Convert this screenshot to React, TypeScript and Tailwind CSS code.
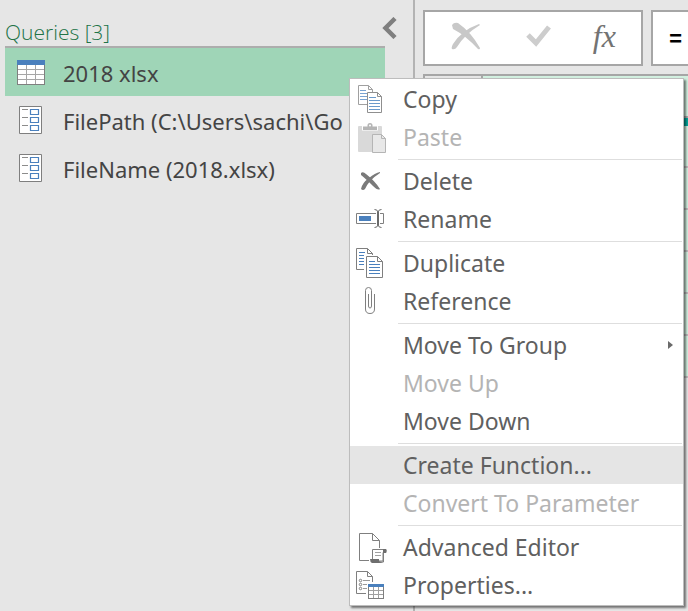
import React from "react";

type IconProps = { children: React.ReactNode };

function Glyph({ children }: IconProps) {
  return (
    <svg width="32" height="32" viewBox="0 0 32 32" fill="none" className="shrink-0 overflow-visible" aria-hidden="true">
      {children}
    </svg>
  );
}

function TableIcon() {
  return (
    <svg width="28" height="25" viewBox="0 0 28 25" className="shrink-0" aria-hidden="true">
      <path d="M0 0h28v25H0z" fill="#7f7f7f" />
      <path d="M1 5h26v19H1z" fill="#fff" />
      <path d="M0 0h28v5H0z" fill="#4a80bd" />
      <path d="M1 9.5h26M1 14.5h26M1 19.5h26M9.5 5v19M18.5 5v19" stroke="#a6a6a6" />
    </svg>
  );
}

function FormIcon() {
  return (
    <svg width="28" height="28" viewBox="0 0 28 28" className="shrink-0" fill="none" aria-hidden="true">
      <path d="M2.5 .5h22v27h-22z" fill="#fff" stroke="#7f7f7f" />
      <path d="M5 3.5h6M5 11.5h6M5 19.5h6" stroke="#8c8c8c" />
      <path d="M13.5 3.5h8v5h-8zM13.5 11.5h8v5h-8zM13.5 19.5h8v5h-8z" stroke="#4a80bd" strokeWidth="1.200" />
    </svg>
  );
}

function CopyIcon() {
  return (
    <Glyph>
      <path d="M2.5 2.5h10l4 4v15h-14z" fill="#fff" stroke="#a0a0a0" />
      <path d="M12.5 2.5v4h4" stroke="#a0a0a0" />
      <path d="M4 7.5h6M4 10.5h7M4 13.5h7M4 16.5h7" stroke="#79a3d2" />
      <path d="M11.5 9.5h10l4 4v16h-14z" fill="#fff" stroke="#8f8f8f" />
      <path d="M21.5 9.5v4h4" stroke="#8f8f8f" />
      <path d="M13 14.5h7M13 17.5h11M13 20.5h11M13 23.5h11M13 26.5h11" stroke="#6b9acb" />
    </Glyph>
  );
}

function PasteIcon() {
  return (
    <Glyph>
      <path d="M2 6q0-1 1-1h22q1 0 1 1v25H3q-1 0-1-1z" fill="#d9d9d9" />
      <path d="M6 9.500V5h16v4.500z" fill="#fff" />
      <path d="M7 9V5.5h4.500Q11 2 14 2t2.500 3.500H21V9z" fill="#b5b5b5" />
      <circle cx="14" cy="4.500" r="1" fill="#fff" />
      <path d="M16.500 13.500h9l4 4v14h-13z" fill="#e8e8e8" stroke="#b5b5b5" />
      <path d="M25.500 13.500v4h4" stroke="#b5b5b5" />
    </Glyph>
  );
}

function DeleteIcon() {
  return (
    <Glyph>
      <path d="M5 8Q7 6 10 9Q19 16 24 24Q22 26 17 21Q10 14 5 10z" fill="#7a7a7a" />
      <path d="M24 8Q13 15 9 24Q7 26 5 24Q6 18 13 13Q19 8 24 7z" fill="#7a7a7a" />
    </Glyph>
  );
}

function RenameIcon() {
  return (
    <Glyph>
      <path d="M20 10.500H.5v10H20M24 10.500h3.500v10H24" stroke="#7f7f7f" />
      <path d="M3 13h12v5H3z" fill="#4a80bd" />
      <path d="M22 8.500v14" stroke="#6a6a6a" strokeWidth="2" />
      <path d="M18.500 6.500q3 0 3.500 2.500q.5-2.500 3.500-2.500M18.500 24.500q3 0 3.500-2.500q.5 2.500 3.500 2.500" stroke="#6a6a6a" />
    </Glyph>
  );
}

function DuplicateIcon() {
  return (
    <Glyph>
      <path d="M8 22.500H.5v-21h11l5 5V8" stroke="#7f7f7f" />
      <path d="M11.500 1.500v5h5" stroke="#7f7f7f" />
      <path d="M3 5.500h6M3 8.500h5M3 11.500h5M3 14.500h5M3 17.500h5" stroke="#4a80bd" />
      <path d="M10.500 9.500h11l5 5v16h-16z" fill="#fff" stroke="#7f7f7f" />
      <path d="M21.500 9.500v5h5" stroke="#7f7f7f" />
      <path d="M13 14.500h6M13 17.500h11M13 20.500h11M13 23.500h11M13 26.500h11" stroke="#4a80bd" />
    </Glyph>
  );
}

function ReferenceIcon() {
  return (
    <Glyph>
      <path
        d="M12.500 9v12q0 2 1.500 2t1.500-2V5.500q0-3-3-3t-3 3V24q0 4.500 4.500 4.500t4.500-4.500V9"
        stroke="#7f7f7f"
      />
    </Glyph>
  );
}

function EditorIcon() {
  return (
    <Glyph>
      <path d="M13 29.500H3.500v-27h13l7 7V17" stroke="#7f7f7f" />
      <path d="M16.500 2.500v7h7" stroke="#7f7f7f" />
      <path d="M16.500 28V18.500h13.500v3h-3V30H18" fill="#fff" stroke="#7f7f7f" />
      <path d="M27 18h3q1 1 0 4h-3z" fill="#6e6e6e" />
      <path d="M19 21.500h6M19 24.500h6" stroke="#a0a0a0" />
      <path d="M14 28h9v2l4 2H16q-2-1-2-4z" fill="#6e6e6e" />
      <path d="M27.500 22v9h-4" stroke="#7f7f7f" />
    </Glyph>
  );
}

function PropertiesIcon() {
  return (
    <Glyph>
      <path d="M10 24.500H.5v-22h11l5 5V13" stroke="#7f7f7f" />
      <path d="M11.500 2.500v5h5" stroke="#7f7f7f" />
      <circle cx="4.500" cy="11.500" r="1.250" stroke="#7f7f7f" />
      <circle cx="4.500" cy="15.500" r="1.250" stroke="#7f7f7f" />
      <circle cx="4.500" cy="19.500" r="1.250" stroke="#7f7f7f" />
      <path d="M7 11.500h7M7 15.500h4M7 19.500h4" stroke="#9a9a9a" />
      <path d="M12 15h16v15H12z" fill="#7f7f7f" />
      <path d="M13 18h14v11H13z" fill="#fff" />
      <path d="M12 15h16v3H12z" fill="#4a80bd" />
      <path d="M13 21.500h14M13 25.500h14M17.500 18v11M22.500 18v11" stroke="#a0a0a0" />
    </Glyph>
  );
}

type Item = {
  label: string;
  icon?: React.ReactNode;
  disabled?: boolean;
  active?: boolean;
  submenu?: boolean;
};

const groups: Item[][] = [
  [
    { label: "Copy", icon: <CopyIcon /> },
    { label: "Paste", icon: <PasteIcon />, disabled: true },
  ],
  [
    { label: "Delete", icon: <DeleteIcon /> },
    { label: "Rename", icon: <RenameIcon /> },
  ],
  [
    { label: "Duplicate", icon: <DuplicateIcon /> },
    { label: "Reference", icon: <ReferenceIcon /> },
  ],
  [
    { label: "Move To Group", submenu: true },
    { label: "Move Up", disabled: true },
    { label: "Move Down" },
  ],
  [
    { label: "Create Function...", active: true },
    { label: "Convert To Parameter", disabled: true },
  ],
  [
    { label: "Advanced Editor", icon: <EditorIcon /> },
    { label: "Properties...", icon: <PropertiesIcon /> },
  ],
];

function MenuItem({ item }: { item: Item }) {
  return (
    <button
      type="button"
      role="menuitem"
      disabled={item.disabled}
      className={`flex h-[38px] w-full items-center gap-[15px] pl-1.5 pr-2.5 text-left ${
        item.active ? "bg-[#e5e5e5]" : ""
      } ${item.disabled ? "text-[#b4b4b4]" : "text-[#606060]"}`}
    >
      {item.icon ?? <span className="size-8 shrink-0" />}
      <span className="grow whitespace-nowrap">{item.label}</span>
      {item.submenu && (
        <svg width="5" height="8" viewBox="0 0 5 8" aria-hidden="true">
          <path d="M0 0l5 4-5 4z" fill="#6a6a6a" />
        </svg>
      )}
    </button>
  );
}

function ContextMenu() {
  return (
    <div
      role="menu"
      className="absolute left-[349px] top-[78px] w-[335px] border border-[#bdbdbd] bg-white py-px text-[23px] leading-8 shadow-[2px_2px_2px_rgba(0,0,0,0.5)]"
    >
      {groups.map((group, index) => (
        <React.Fragment key={group[0].label}>
          {index > 0 && <hr className="mb-0.5 ml-12 mr-px mt-[3px] border-[#dedede]" />}
          {group.map((item) => (
            <MenuItem key={item.label} item={item} />
          ))}
        </React.Fragment>
      ))}
    </div>
  );
}

const queries = [
  { name: "2018 xlsx", icon: <TableIcon />, selected: true },
  { name: "FilePath (C:\\Users\\sachi\\Go", icon: <FormIcon />, selected: false },
  { name: "FileName (2018.xlsx)", icon: <FormIcon />, selected: false },
];

function QueriesPane() {
  return (
    <aside className="w-[415px] shrink-0 border-r-2 border-[#b3b3b3] pl-[5px]">
      <header className="flex h-[46px] items-end justify-between pr-4">
        <h1 className="font-['Open_Sans','Noto_Sans',sans-serif] text-[21px] font-light leading-7 text-[#217346]">
          Queries [3]
        </h1>
        <button type="button" aria-label="Collapse" className="pb-[7px]">
          <svg width="15" height="22" viewBox="0 0 15 22" fill="none" aria-hidden="true">
            <path d="M13 1.500L3.500 11l9.500 9.500" stroke="#7f7f7f" strokeWidth="4.500" />
          </svg>
        </button>
      </header>
      <ul className="mr-7 border-t-2 border-[#adadad]">
        {queries.map((query) => (
          <li key={query.name}>
            <button
              type="button"
              className={`flex h-12 w-full items-center gap-[18px] pl-3 text-left text-[22px] leading-8 text-[#444444] ${
                query.selected ? "bg-[#9fd5b7]" : ""
              }`}
            >
              {query.icon}
              <span className="whitespace-nowrap pt-0.5">{query.name}</span>
            </button>
          </li>
        ))}
      </ul>
    </aside>
  );
}

function FormulaBar() {
  return (
    <div className="flex h-14 gap-2">
      <div className="flex w-[220px] shrink-0 items-center border-2 border-[#a6a6a6] bg-white">
        <button type="button" aria-label="Cancel" className="flex flex-1 justify-center pl-2 pb-1">
          <svg width="30" height="28" viewBox="0 0 30 28" fill="#c8c8c8" aria-hidden="true">
            <path d="M1 3Q3 0 7 1Q20 10 29 26Q29 28 27 27Q14 13 2 7z" />
            <path d="M29 3Q14 12 6 25Q4 28 1 27Q0 26 2 22Q11 8 28 2z" />
          </svg>
        </button>
        <button type="button" aria-label="Apply" className="flex flex-1 justify-center pb-1 pl-2">
          <svg width="26" height="22" viewBox="0 0 26 22" fill="none" aria-hidden="true">
            <path d="M2 10l8 8L23 2" stroke="#cdcdcd" strokeWidth="5" />
          </svg>
        </button>
        <button
          type="button"
          aria-label="Insert function"
          className="flex-1 pb-1 pr-1 font-['Liberation_Serif',serif] text-[32px] italic leading-8 text-[#737373]"
        >
          fx
        </button>
      </div>
      <input
        aria-label="Formula"
        defaultValue="="
        className="min-w-0 flex-1 border-2 border-r-0 border-[#a6a6a6] bg-white pl-4 pt-1 font-['Liberation_Mono',monospace] text-[22px] font-bold text-black outline-none"
      />
    </div>
  );
}

const rows = [1, 2, 3, 4, 5, 6];

function DataGrid() {
  return (
    <table className="mt-2 w-full border-separate border-spacing-0">
      <thead>
        <tr className="h-11">
          <th className="w-[60px] border-x-2 border-y-2 border-[#a6a6a6]" />
          <th className="border-y-2 border-[#a6a6a6] bg-[#d2f0e0]" />
        </tr>
        <tr className="h-2 bg-[#00a499]">
          <th />
          <th />
        </tr>
      </thead>
      <tbody>
        {rows.map((row) => (
          <tr key={row} className="h-[42px]">
            <td className="border-x-2 border-b-2 border-[#bcbcbc]" />
            <td className="border-b-2 border-[#bcbcbc] bg-[#d2f0e0]" />
          </tr>
        ))}
      </tbody>
    </table>
  );
}

export default function App() {
  return (
    <div className="relative flex h-screen overflow-hidden bg-[#e6e6e6] font-['Noto_Sans','Open_Sans',sans-serif]">
      <QueriesPane />
      <main className="min-w-0 flex-1 pl-2 pt-2.5">
        <FormulaBar />
        <DataGrid />
      </main>
      <ContextMenu />
    </div>
  );
}
